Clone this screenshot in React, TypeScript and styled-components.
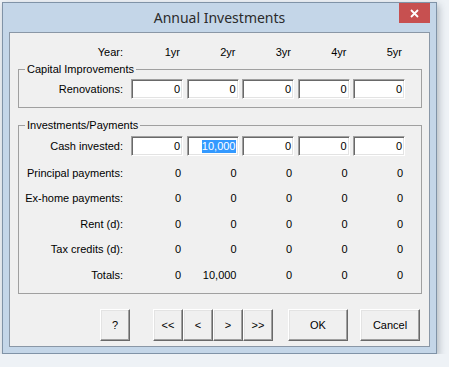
import React from 'react';
import styled, { createGlobalStyle } from 'styled-components';

const GlobalStyle = createGlobalStyle`
  html, body {
    margin: 0;
    padding: 0;
    background: #eef2f6;
  }
  body {
    font-family: "Liberation Sans", Arial, sans-serif;
    font-size: 11px;
    color: #000;
  }
`;

const Window = styled.div`
  margin: 2px 0 0 2px;
  width: 435px;
  box-sizing: border-box;
  border: 1px solid #8093a7;
  background: #c4d6e8;
  padding: 0 6px 6px;
  box-shadow: 2px 3px 7px rgba(40, 55, 70, 0.3);
`;

const TitleBar = styled.div`
  height: 29px;
  display: grid;
  grid-template-columns: 1fr auto 1fr;
  align-items: center;
`;

const Title = styled.div`
  grid-column: 2;
  font-family: "Noto Sans", "Open Sans", sans-serif;
  font-size: 14px;
  color: #2b2b2b;
  line-height: 29px;
`;

const CloseButton = styled.div`
  grid-column: 3;
  justify-self: end;
  align-self: start;
  width: 31px;
  height: 20px;
  background: #c75050;
  display: flex;
  align-items: center;
  justify-content: center;
`;

const Client = styled.div`
  height: 315px;
  box-sizing: border-box;
  border: 1px solid #8a97a6;
  background: #f0f0f0;
  display: flex;
  flex-direction: column;
`;

const Row = styled.div<{ $h?: number }>`
  display: grid;
  grid-template-columns: 108.5px repeat(5, 52px);
  column-gap: 3.5px;
  align-items: center;
  height: ${({ $h }) => $h ?? 20}px;
`;

const HeaderRow = styled(Row)`
  margin-top: 9px;
  padding-left: 9px;
`;

const Label = styled.div`
  text-align: right;
  padding-right: 4.5px;
  white-space: nowrap;
`;

const Cell = styled.div<{ $pad?: number }>`
  text-align: right;
  padding-right: ${({ $pad }) => $pad ?? 2}px;
  white-space: nowrap;
`;

const Group = styled.fieldset<{ $top?: number; $pt: number; $pb: number }>`
  margin: ${({ $top }) => $top ?? 0}px 7px 0 8px;
  border: 1px solid #a0a0a0;
  padding: ${({ $pt }) => $pt}px 0 ${({ $pb }) => $pb}px 0;
  min-width: 0;
`;

const Legend = styled.legend`
  margin-left: 6px;
  padding: 0 2px;
  line-height: 14px;
  font-size: 11px;
`;

const Field = styled.div`
  height: 20px;
  box-sizing: border-box;
  background: #fff;
  border: 1px solid;
  border-color: #a0a0a0 #fff #fff #a0a0a0;
  box-shadow: inset 1px 1px 0 #696969, inset -1px -1px 0 #e3e3e3;
  display: flex;
  align-items: center;
  justify-content: flex-end;
  padding-right: 2px;
  white-space: nowrap;
`;

const Selected = styled.span`
  background: #3399ff;
  color: #fff;
  line-height: 13px;
`;

const StaticRows = styled.div`
  margin-top: 4px;
`;

const ButtonBar = styled.div`
  margin-top: 15px;
  padding-right: 9px;
  display: flex;
  justify-content: flex-end;
  align-items: center;
`;

const NavGroup = styled.div`
  display: flex;
  margin: 0 15px 0 23px;
`;

const Button = styled.div<{ $w: number }>`
  width: ${({ $w }) => $w}px;
  height: 32px;
  box-sizing: border-box;
  border: 1px solid;
  border-color: #fff #696969 #696969 #fff;
  box-shadow: inset -1px -1px 0 #a0a0a0, inset 1px 1px 0 #e3e3e3;
  background: #f0f0f0;
  display: flex;
  align-items: center;
  justify-content: center;
  font-size: 11px;
`;

const CancelButton = styled(Button)`
  margin-left: 12px;
`;

const years = ['1yr', '2yr', '3yr', '4yr', '5yr'];

const staticRows: [string, string[]][] = [
  ['Principal payments:', ['0', '0', '0', '0', '0']],
  ['Ex-home payments:', ['0', '0', '0', '0', '0']],
  ['Rent (d):', ['0', '0', '0', '0', '0']],
  ['Tax credits (d):', ['0', '0', '0', '0', '0']],
  ['Totals:', ['0', '10,000', '0', '0', '0']],
];

const App: React.FC = () => {
  return (
    <>
      <GlobalStyle />
      <Window>
        <TitleBar>
          <Title>Annual Investments</Title>
          <CloseButton>
            <svg width="9" height="9" viewBox="0 0 9 9">
              <path d="M1 1 L8 8 M8 1 L1 8" stroke="#fff" strokeWidth="1.8" />
            </svg>
          </CloseButton>
        </TitleBar>
        <Client>
          <HeaderRow>
            <Label>Year:</Label>
            {years.map(y => (
              <Cell key={y} $pad={3}>{y}</Cell>
            ))}
          </HeaderRow>

          <Group $pt={3} $pb={8}>
            <Legend>Capital Improvements</Legend>
            <Row>
              <Label>Renovations:</Label>
              {years.map(y => (
                <Field key={y}>0</Field>
              ))}
            </Row>
          </Group>

          <Group $top={10} $pt={4} $pb={5.5}>
            <Legend>Investments/Payments</Legend>
            <Row>
              <Label>Cash invested:</Label>
              <Field>0</Field>
              <Field><Selected>10,000</Selected></Field>
              <Field>0</Field>
              <Field>0</Field>
              <Field>0</Field>
            </Row>
            <StaticRows>
              {staticRows.map(([label, values]) => (
                <Row key={label} $h={25.5}>
                  <Label>{label}</Label>
                  {values.map((v, i) => (
                    <Cell key={i}>{v}</Cell>
                  ))}
                </Row>
              ))}
            </StaticRows>
          </Group>

          <ButtonBar>
            <Button $w={30}>?</Button>
            <NavGroup>
              <Button $w={30}>&lt;&lt;</Button>
              <Button $w={30}>&lt;</Button>
              <Button $w={30}>&gt;</Button>
              <Button $w={30}>&gt;&gt;</Button>
            </NavGroup>
            <Button $w={60}>OK</Button>
            <CancelButton $w={60}>Cancel</CancelButton>
          </ButtonBar>
        </Client>
      </Window>
    </>
  );
};

export default App;
